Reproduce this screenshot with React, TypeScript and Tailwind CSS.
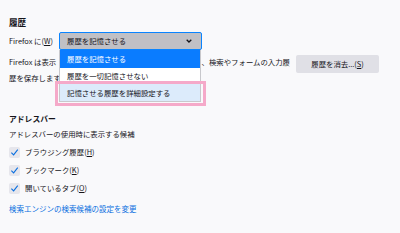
import React from "react";

const font = { fontFamily: '"Noto Sans CJK JP", "Noto Sans", sans-serif' };

function Check({ label, u }: { label: string; u: string }) {
  return (
    <div className="flex items-center h-[18px] gap-[5px]">
      <div className="w-[11px] h-[11px] rounded-[2px] bg-[#e6e6ec] flex items-center justify-center">
        <svg width="9" height="9" viewBox="0 0 10 10">
          <path d="M1.5 5.2 L4 7.6 L8.6 1.8" fill="none" stroke="#0a6fe0" strokeWidth="1.2" />
        </svg>
      </div>
      <span className="text-[7.4px] leading-[12px] text-[#15141a]">
        {label}(<span className="underline">{u}</span>)
      </span>
    </div>
  );
}

export default function App() {
  return (
    <div
      className="relative w-[400px] h-[233px] bg-[#f9f9fb] overflow-hidden pl-[9px] pt-[17px] text-[#15141a]"
      style={font}
    >
      <div className="text-[8.6px] leading-[11px] font-bold">履歴</div>
      <div className="mt-[4px] flex items-center h-[18px]">
        <span className="text-[7.4px] w-[50px]">
          Firefox に(<span className="underline">W</span>)
        </span>
        <div className="w-[143px] h-[18px] bg-[#c0c0c5] border border-[#0a84ff] rounded-[2px] flex items-center justify-between pl-[7px] pr-[9px]">
          <span className="text-[7.4px]">履歴を記憶させる</span>
          <svg width="6" height="4" viewBox="0 0 6 4">
            <path d="M0.7 0.7 L3 3 L5.3 0.7" fill="none" stroke="#15141a" strokeWidth="1.3" />
          </svg>
        </div>
      </div>
      <div className="mt-[4px] flex items-start">
        <div className="w-[281px] text-[7.4px] leading-[15.5px]">
          <div className="flex justify-between whitespace-nowrap">
            <span>Firefox は表示</span>
            <span>、検索やフォームの入力履</span>
          </div>
          <div>歴を保存します。</div>
        </div>
        <div className="ml-[6px] mt-[1px] w-[83px] h-[18px] bg-[#e0e0e6] rounded-[2px] flex items-center justify-center text-[7.4px]">
          履歴を消去...(<span className="underline">S</span>)
        </div>
      </div>
      <div className="mt-[28px] text-[7.8px] leading-[11px] font-bold">アドレスバー</div>
      <div className="mt-[4px] text-[7.4px] leading-[12px]">アドレスバーの使用時に表示する候補</div>
      <div className="mt-[3px] flex flex-col">
        <Check label="ブラウジング履歴" u="H" />
        <Check label="ブックマーク" u="K" />
        <Check label="開いているタブ" u="O" />
      </div>
      <div className="mt-[6px] text-[7.5px] leading-[12px] text-[#0a6fe0]">
        検索エンジンの検索候補の設定を変更
      </div>

      <div className="absolute left-[59px] top-[50px] w-[142px] bg-white border border-[#c8c8cc] border-t-0 text-[7.4px]">
        <div className="h-[18px] bg-[#0a7cff] text-white flex items-center pl-[7px]">履歴を記憶させる</div>
        <div className="h-[16px] flex items-center pl-[7px]">履歴を一切記憶させない</div>
        <div className="h-[17px] bg-[#dcebfb] flex items-center pl-[7px]">記憶させる履歴を詳細設定する</div>
      </div>
      <div className="absolute left-[55px] top-[81px] w-[151px] h-[25px] border-[3px] border-[#f5a9c9]"></div>
    </div>
  );
}
